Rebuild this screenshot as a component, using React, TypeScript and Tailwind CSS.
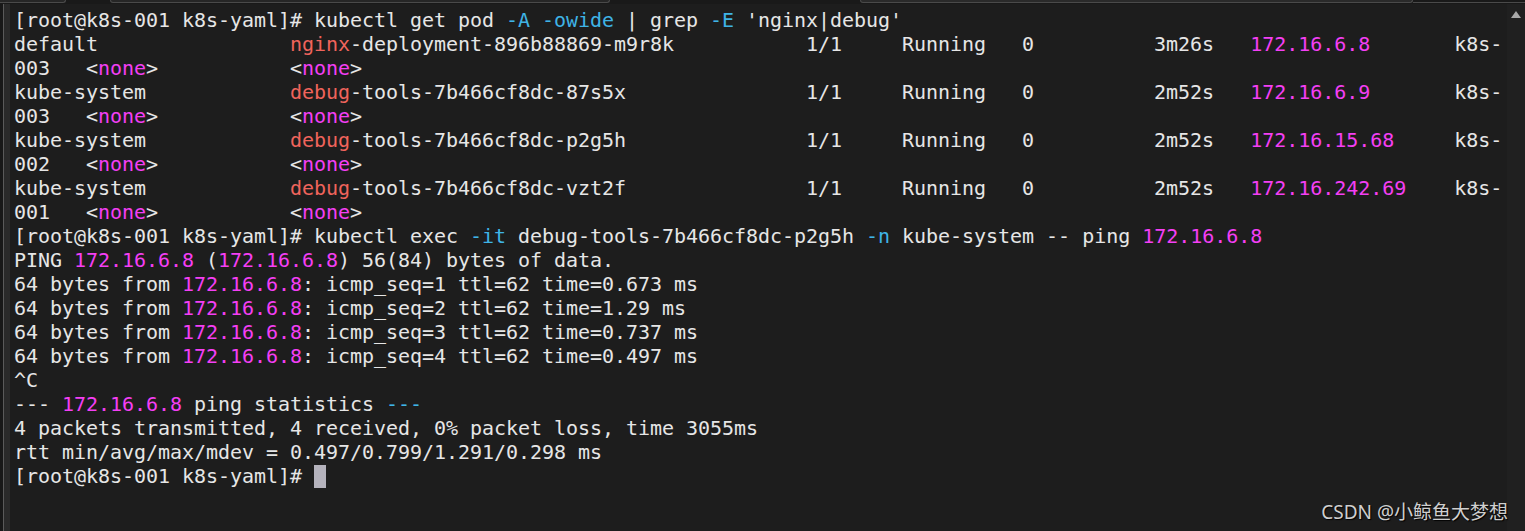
type Seg = [string, string?];

const W = 'text-[#e6e6e6]';
const MAG = 'text-[#f43ff4]';
const RED = 'text-[#f0645c]';
const CY = 'text-[#3fb4e6]';

const pad = (s: string, n: number) => s + ' '.repeat(Math.max(0, n - s.length));

const pods = [
  { ns: 'default', hl: 'nginx', rest: '-deployment-896b88869-m9r8k', age: '3m26s', ip: '172.16.6.8', node: '003' },
  { ns: 'kube-system', hl: 'debug', rest: '-tools-7b466cf8dc-87s5x', age: '2m52s', ip: '172.16.6.9', node: '003' },
  { ns: 'kube-system', hl: 'debug', rest: '-tools-7b466cf8dc-p2g5h', age: '2m52s', ip: '172.16.15.68', node: '002' },
  { ns: 'kube-system', hl: 'debug', rest: '-tools-7b466cf8dc-vzt2f', age: '2m52s', ip: '172.16.242.69', node: '001' },
];

const prompt = '[root@k8s-001 k8s-yaml]# ';
const ip = '172.16.6.8';

function buildLines(): Seg[][] {
  const lines: Seg[][] = [];
  lines.push([
    [prompt + 'kubectl get pod '],
    ['-A -owide', CY],
    [' | grep '],
    ['-E', CY],
    [" 'nginx|debug'"],
  ]);
  pods.forEach(p => {
    lines.push([
      [pad(p.ns, 23)],
      [p.hl, RED],
      [pad(p.rest, 66 - 23 - p.hl.length) + pad('1/1', 8) + pad('Running', 10) + pad('0', 11) + pad(p.age, 8)],
      [p.ip, MAG],
      [' '.repeat(120 - 103 - p.ip.length) + 'k8s-'],
    ]);
    lines.push([
      [p.node + '   <'],
      ['none', MAG],
      ['>' + ' '.repeat(11) + '<'],
      ['none', MAG],
      ['>'],
    ]);
  });
  lines.push([
    [prompt + 'kubectl exec '],
    ['-it', CY],
    [' debug-tools-7b466cf8dc-p2g5h '],
    ['-n', CY],
    [' kube-system -- ping '],
    [ip, MAG],
  ]);
  lines.push([['PING '], [ip, MAG], [' ('], [ip, MAG], [') 56(84) bytes of data.']]);
  ['0.673', '1.29', '0.737', '0.497'].forEach((t, i) => {
    lines.push([['64 bytes from '], [ip, MAG], [`: icmp_seq=${i + 1} ttl=62 time=${t} ms`]]);
  });
  lines.push([['^C']]);
  lines.push([['--- '], [ip, MAG], [' ping statistics '], ['---', CY]]);
  lines.push([['4 packets transmitted, 4 received, 0% packet loss, time 3055ms']]);
  lines.push([['rtt min/avg/max/mdev = 0.497/0.799/1.291/0.298 ms']]);
  lines.push([[prompt]]);
  return lines;
}

export default function App() {
  const lines = buildLines();

  return (
    <div className="relative w-[1525px] h-[531px] bg-[#1d1d1d] overflow-hidden flex flex-col">
      {/* tab strip */}
      <div className="h-[4px] flex bg-[#191919]">
        <div className="w-[66px] h-[3px] rounded-br-[6px] border-b border-r border-[#4a4a4a] bg-[#262626]" />
        <div className="w-[44px]" />
        <div className="w-[500px] h-[3px] rounded-b-[6px] border-b border-x border-[#4a4a4a] bg-[#262626]" />
        <div className="w-[250px]" />
        <div className="w-[553px] h-[3px] rounded-b-[6px] border-b border-x border-[#4a4a4a] bg-[#2a2a2a]" />
        <div className="flex-1 h-[3px] border-b border-[#4a4a4a]" />
      </div>

      <div className="flex flex-1 min-h-0">
        {/* left frame */}
        <div className="w-[3px] bg-[#181818]" />
        <div className="w-[1px] bg-[#5a5a5a]" />
        <div className="w-[6px] bg-[#2a2a2a]" />

        {/* terminal text */}
        <div
          className="flex-1 pl-[4px] pt-[4px] overflow-hidden whitespace-pre text-[20px] leading-[24px] tracking-[-0.04px] text-[#e6e6e6]"
          style={{ fontFamily: '"DejaVu Sans Mono", "Liberation Mono", monospace' }}
        >
          {lines.map((segs, i) => (
            <div key={i} className="h-[24px] flex items-center">
              {segs.map(([t, c], j) => (
                <span key={j} className={c ?? W}>
                  {t}
                </span>
              ))}
              {i === lines.length - 1 && (
                <span className="inline-block w-[12px] h-[23px] bg-[#b4b2bc]" />
              )}
            </div>
          ))}
        </div>

        {/* scrollbar */}
        <div className="w-[18px] bg-[#202020] flex flex-col items-center pt-[6px]">
          <svg width="12" height="10" viewBox="0 0 12 10">
            <path d="M6 1 L11 8 L1 8 Z" fill="#a8a8a8" />
          </svg>
        </div>
      </div>

      {/* watermark */}
      <div
        className="absolute right-[17px] bottom-[7px] text-[19px] leading-[24px] text-[#cfcfcf] [text-shadow:1px_1px_1px_#000]"
        style={{ fontFamily: '"Noto Sans", "Noto Sans CJK SC", sans-serif' }}
      >
        CSDN @小鲸鱼大梦想
      </div>
    </div>
  );
}
